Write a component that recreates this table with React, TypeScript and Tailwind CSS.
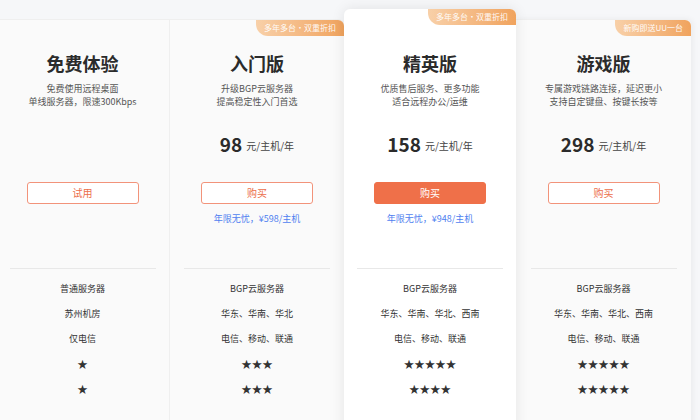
import React from 'react';

type Plan = {
  name: string;
  desc: string[];
  price?: string;
  action: string;
  note?: string;
  badge?: string;
  featured?: boolean;
  rows: string[];
  width: string;
  extra: string;
};

const plans: Plan[] = [
  {
    name: '免费体验',
    desc: ['免费使用远程桌面', '单线服务器，限速300Kbps'],
    action: '试用',
    rows: ['普通服务器', '苏州机房', '仅电信', '★', '★'],
    width: 'w-[174px]',
    extra: 'border-r border-[#eeeeee]',
  },
  {
    name: '入门版',
    desc: ['升级BGP云服务器', '提高稳定性入门首选'],
    price: '98',
    action: '购买',
    note: '年限无忧，¥598/主机',
    badge: '多年多台·双重折扣',
    rows: ['BGP云服务器', '华东、华南、华北', '电信、移动、联通', '★★★', '★★★'],
    width: 'w-[174px]',
    extra: 'rounded-tr-[6px]',
  },
  {
    name: '精英版',
    desc: ['优质售后服务、更多功能', '适合远程办公/运维'],
    price: '158',
    action: '购买',
    note: '年限无忧，¥948/主机',
    badge: '多年多台·双重折扣',
    featured: true,
    rows: ['BGP云服务器', '华东、华南、华北、西南', '电信、移动、联通', '★★★★★', '★★★★'],
    width: 'w-[172px]',
    extra: '',
  },
  {
    name: '游戏版',
    desc: ['专属游戏链路连接，延迟更小', '支持自定键盘、按键长按等'],
    price: '298',
    action: '购买',
    badge: '新购即送UU一台',
    rows: ['BGP云服务器', '华东、华南、华北、西南', '电信、移动、联通', '★★★★★', '★★★★★'],
    width: 'w-[175px]',
    extra: 'rounded-tr-[6px] shadow-[2px_0_6px_rgba(0,0,0,0.05)]',
  },
];

const PlanCard = ({ plan }: { plan: Plan }) => {
  const featured = plan.featured;
  return (
    <div
      className={`relative shrink-0 flex flex-col items-center h-[440px] ${plan.width} ${plan.extra} ${
        featured
          ? '-mt-[10px] pt-[42px] bg-white rounded-[6px] shadow-[0_0_14px_rgba(0,0,0,0.09)] z-10'
          : 'pt-[31px] bg-[#fafafa] border-t border-[#efefef]'
      }`}
    >
      {plan.badge && (
        <div className="absolute top-0 right-0 h-[16px] px-[8px] rounded-bl-[12px] rounded-tr-[6px] bg-linear-to-r from-[#f8d0a8] to-[#f0a35d] text-[8px] leading-[16px] text-white/95">
          {plan.badge}
        </div>
      )}
      <div className="h-[24px] text-[18px] leading-[24px] font-bold text-[#2b2b2b]">{plan.name}</div>
      <div className="mt-[7px] text-[9px] leading-[13px] text-[#555] text-center">
        {plan.desc.map((d) => (
          <div key={d} className="h-[13px]">
            {d}
          </div>
        ))}
      </div>
      <div className="mt-[24px] h-[24px] flex items-center gap-[4px] text-[#2b2b2b]">
        {plan.price && (
          <>
            <span className="text-[19px] font-semibold leading-[24px]">{plan.price}</span>
            <span className="text-[10px] leading-[24px] pt-[3px] text-[#444]">元/主机/年</span>
          </>
        )}
      </div>
      <button
        className={`mt-[26px] w-[112px] h-[22px] rounded-[3px] text-[10px] leading-[20px] ${
          featured
            ? 'bg-[#ef7049] border border-[#ef7049] text-white'
            : 'border border-[#f2937a] text-[#ec6e4a] bg-white'
        }`}
      >
        {plan.action}
      </button>
      <div className="mt-[8px] h-[14px] text-[9px] leading-[14px] text-[#4f7ff0]">{plan.note ?? ''}</div>
      <div className="mt-[42px] h-px w-[146px] bg-[#e8e8e8]" />
      <div className="mt-[7px] flex flex-col items-center text-[9px] text-[#333]">
        {plan.rows.map((r, i) => (
          <div
            key={i}
            className={`h-[25px] flex items-center ${r.startsWith('★') ? 'text-[10.5px] text-[#333]' : ''}`}
          >
            {r}
          </div>
        ))}
      </div>
    </div>
  );
};

export default function App() {
  return (
    <div
      className="w-[700px] h-[420px] overflow-hidden bg-[#f6f7f9]"
      style={{ fontFamily: '"Noto Sans CJK SC", "Noto Sans", sans-serif' }}
    >
      <div className="flex items-start pt-[19px] -ml-[4px]">
        {plans.map((p) => (
          <PlanCard key={p.name} plan={p} />
        ))}
      </div>
    </div>
  );
}
